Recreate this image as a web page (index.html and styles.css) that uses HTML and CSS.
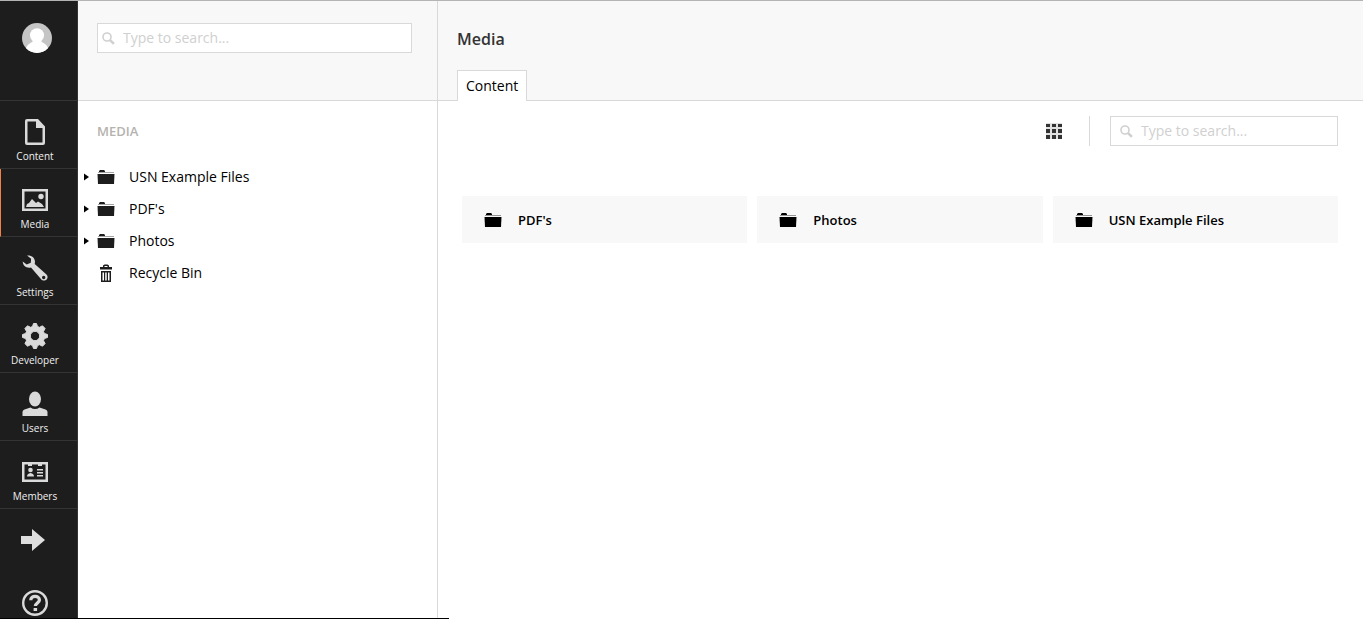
FILE: index.html
```html
<!DOCTYPE html>
<html lang="en">
<head>
<meta charset="utf-8">
<meta name="viewport" content="width=device-width, initial-scale=1">
<title>Media</title>
<link rel="stylesheet" href="styles.css">
</head>
<body>
<svg class="symbols" aria-hidden="true">
  <symbol id="folder" viewBox="0 0 18 14"><path d="M2 1 3 0h4l1 1v1H2z"/><path d="M1 2h16v1H1z" opacity=".4"/><path d="M.5 4h17L17 14H1z"/></symbol>
  <symbol id="search" viewBox="0 0 13 13"><circle cx="5" cy="5" r="4" fill="none" stroke="currentColor" stroke-width="1.600"/><path d="m7.200 9 1.800-1.800L12.800 11 11 12.800z"/></symbol>
  <symbol id="caret" viewBox="0 0 5 8"><path d="M0 .5 5 4 0 7.500z"/></symbol>
</svg>
<div class="app">
  <nav class="sections" aria-label="Sections">
    <button class="avatar" aria-label="Profile">
      <svg width="30" height="30" viewBox="0 0 30 30"><defs><clipPath id="round"><circle cx="15" cy="15" r="15"/></clipPath></defs><g clip-path="url(#round)"><path fill="#c5c5c5" d="M0 0h30v30H0z"/><circle cx="15" cy="12.300" r="7" fill="#fff"/><path fill="#fff" d="M11 16h8v2q1 1.500 3 2.200 3 1.500 4.500 5.300V30h-23v-4.500Q5 21.700 8 20.200q2-.7 3-2.200z"/></g></svg>
    </button>
    <a class="section" href="#content"><svg class="icon" viewBox="0 0 26 26"><path fill-rule="evenodd" d="M5 0h11l7 7.500V24q0 2-2 2H5q-2 0-2-2V2q0-2 2-2zm.5 2.500v21h15V9H14V2.500z"/></svg>Content</a>
    <a class="section active" href="#media"><svg class="icon" viewBox="0 0 26 26"><path fill-rule="evenodd" d="M0 2h26v22H0zm2.500 2.500v17h21v-17z"/><path d="m4 20 1-3 2-1 3-4 4 4 2-1.500 4 2.500 2 3z"/><circle cx="19" cy="9.500" r="2.700"/></svg>Media</a>
    <a class="section" href="#settings"><svg class="icon" viewBox="0 0 26 26"><path fill-rule="evenodd" d="M5 .5C9.500 0 13 2.800 13 7l-.3 2L24.500 19.500c2 2 1 5-1 5.700-2 .8-3.600.2-5-1.700L9 12.500c-4.500 1-8-1.500-8.300-6l4 3 4.100-1.800.3-4zm16.700 20.300a1.700 1.700 0 1 0 0 3.400 1.700 1.700 0 0 0 0-3.400z"/></svg>Settings</a>
    <a class="section" href="#developer"><svg class="icon" viewBox="0 0 26 26"><path fill-rule="evenodd" d="M11.500.5h3l1 3 2 .8 3-1.500 2.600 2.700-1.600 3 .9 2 3.100 1v3l-3.100 1-.9 2.200 1.600 2.900-2.600 2.600-3-1.500-2 .8-1 3h-3l-1-3-2-.8-3 1.500-2.600-2.600 1.600-2.900-.9-2.200-3.100-1v-3l3.100-1 .9-2-1.600-3 2.600-2.700 3 1.500 2-.8zM13 8.300a4.700 4.700 0 1 0 0 9.400 4.700 4.700 0 0 0 0-9.400z" stroke="currentColor" stroke-linejoin="round"/></svg>Developer</a>
    <a class="section" href="#users"><svg class="icon" viewBox="0 0 26 26"><ellipse cx="13" cy="8" rx="6" ry="7.500"/><path d="M.5 25v-4q0-2 2-2.500l6-2q4.500 3 9 0l6 2q2 .5 2 2.500v4z"/></svg>Users</a>
    <a class="section" href="#members"><svg class="icon" viewBox="0 0 26 26"><path fill-rule="evenodd" d="M0 3h26v20H0zm2.500 2.500v15h21v-15H20V7h-4V5.500h-6V7H6V5.500z"/><circle cx="8.500" cy="11" r="2.300"/><path d="M5 17.500q0-3 3.500-3.500 3.500.5 3.500 3.500zM15 10h6v1.500h-6zM15 13h6v1.500h-6zM15 16h6v1.500h-6z"/></svg>Members</a>
    <a class="more" href="#more" aria-label="More sections"><svg width="24" height="22" viewBox="0 0 24 22"><path d="M0 7h11V0l13 11-13 11v-7H0z"/></svg></a>
    <a class="help" href="#help" aria-label="Help"><svg class="icon" viewBox="0 0 26 26"><g fill="none" stroke="currentColor"><circle cx="13" cy="13" r="11.800" stroke-width="2.400"/><path d="M8.800 10.300c0-5.200 8.600-5.200 8.600-.4 0 3-4 3.300-4 6.200" stroke-width="3.300"/></g><path d="M11.600 18h3.500v3h-3.500z"/></svg></a>
  </nav>
  <aside class="tree">
    <div class="tree-head">
      <label class="search"><svg width="13" height="13"><use href="#search"/></svg><input type="text" placeholder="Type to search..." aria-label="Search tree"></label>
    </div>
    <h2 class="tree-title">MEDIA</h2>
    <ul class="nodes">
      <li><a href="#usn"><svg class="caret" width="5" height="8"><use href="#caret"/></svg><svg class="node-icon" width="18" height="14"><use href="#folder"/></svg>USN Example Files</a></li>
      <li><a href="#pdfs"><svg class="caret" width="5" height="8"><use href="#caret"/></svg><svg class="node-icon" width="18" height="14"><use href="#folder"/></svg>PDF's</a></li>
      <li><a href="#photos"><svg class="caret" width="5" height="8"><use href="#caret"/></svg><svg class="node-icon" width="18" height="14"><use href="#folder"/></svg>Photos</a></li>
      <li><a href="#bin"><span class="caret"></span><svg class="node-icon" width="18" height="18" viewBox="0 0 18 18"><path fill-rule="evenodd" d="M3 3h3V1.500L7.500.5h3L12 1.500V3h3v2.500H3zm4.500 0h3V2h-3zM4 7h10v11H4zm1.500 1.500v8H7v-8zm2.700 0v8h1.500v-8zm2.800 0v8h1.500v-8z"/></svg>Recycle Bin</a></li>
    </ul>
  </aside>
  <main class="main">
    <header class="main-head">
      <h1>Media</h1>
      <div class="tabs" role="tablist"><button class="tab" role="tab" aria-selected="true">Content</button></div>
    </header>
    <div class="toolbar">
      <button class="grid-button" aria-label="Grid layout"><svg width="16" height="16" viewBox="0 0 16 16"><path d="M0 0h16v16H0z" opacity=".15"/><path d="M0 1h4v3H0zM6 1h4v3H6zM12 1h4v3h-4zM0 6h4v4H0zM6 6h4v4H6zM12 6h4v4h-4zM0 12h4v4H0zM6 12h4v4H6zM12 12h4v4h-4z"/></svg></button>
      <label class="search list-search"><svg width="13" height="13"><use href="#search"/></svg><input type="text" placeholder="Type to search..." aria-label="Search media"></label>
    </div>
    <div class="cards">
      <a class="card" href="#pdfs"><svg width="18" height="14"><use href="#folder"/></svg>PDF's</a>
      <a class="card" href="#photos"><svg width="18" height="14"><use href="#folder"/></svg>Photos</a>
      <a class="card" href="#usn"><svg width="18" height="14"><use href="#folder"/></svg>USN Example Files</a>
    </div>
  </main>
</div>
<div class="status-edge"></div>
</body>
</html>
```
FILE: styles.css
```css
* { box-sizing: border-box; }
body {
  margin: 0;
  font: 14px/20px "Open Sans", sans-serif;
  color: #000;
  background: #fff;
}
a { color: inherit; text-decoration: none; }
button { font: inherit; color: inherit; border: 0; background: none; padding: 0; }
svg { display: block; fill: currentColor; flex: none; }
.symbols { position: absolute; width: 0; height: 0; }
.app {
  display: grid;
  grid-template-columns: 78px 360px 1fr;
  height: 100vh;
  overflow: hidden;
  border-top: 1px solid #b4b4b4;
}

/* Section bar */
.sections {
  display: flex;
  flex-direction: column;
  background: #1d1d1d;
  border-right: 1px solid #343434;
  color: #dedede;
  overflow: hidden;
}
.avatar {
  flex: none;
  display: flex;
  justify-content: center;
  height: 100px;
  padding: 22px 3px 0 0;
  border-bottom: 1px solid #343434;
}
.section {
  flex: none;
  display: flex;
  flex-direction: column;
  align-items: center;
  gap: 3px;
  height: 68px;
  padding: 18px 7px 0 0;
  border-bottom: 1px solid #343434;
  font-size: 10px;
  line-height: 16px;
  color: #f0f0f0;
}
.section.active { border-left: 1px solid #f57f45; padding-right: 8px; }
.icon { width: 26px; height: 26px; color: #dadada; }
.more { flex: none; padding: 20px 0 0 21px; height: 81px; }
.help { flex: none; padding-left: 22px; }

/* Tree */
.tree { border-right: 1px solid #d9d9d9; }
.tree-head {
  height: 100px;
  padding: 22px 25px 0 19px;
  background: #f8f8f8;
  border-bottom: 1px solid #d9d9d9;
}
.search {
  display: flex;
  align-items: center;
  gap: 8px;
  height: 30px;
  padding: 0 4px;
  border: 1px solid #d9d9d9;
  background: #fff;
  color: #d0d0d0;
}
.search input {
  flex: 1;
  min-width: 0;
  padding: 0;
  border: 0;
  outline: 0;
  background: none;
  font: inherit;
  color: #333;
}
.search input::placeholder { color: #d0d0d0; opacity: 1; }
.tree-title {
  margin: 20px 0 20px 19px;
  font-size: 13px;
  font-weight: 600;
  line-height: 20px;
  color: #b5b3ae;
}
.nodes { margin: 0; padding: 0; list-style: none; }
.nodes a { display: flex; align-items: center; height: 32px; padding-left: 6px; }
.caret { width: 5px; margin-right: 8px; }
.node-icon { margin-right: 14px; color: #1d1d1d; }

/* Main area */
.main { min-width: 0; }
.main-head {
  display: flex;
  flex-direction: column;
  justify-content: space-between;
  height: 100px;
  padding: 28px 19px 0;
  background: #f8f8f8;
  border-bottom: 1px solid #d9d9d9;
}
h1 { margin: 0; font-size: 16px; font-weight: 600; line-height: 20px; color: #333; }
.tabs { display: flex; margin-bottom: -1px; }
.tab {
  height: 31px;
  padding: 0 8px;
  border: 1px solid #d9d9d9;
  border-bottom: 0;
  background: #fff;
}
.toolbar {
  display: flex;
  justify-content: flex-end;
  align-items: center;
  padding: 15px 25px 0 24px;
}
.grid-button {
  height: 30px;
  padding-right: 27px;
  border-right: 1px solid #d9d9d9;
  margin-right: 20px;
  color: #333;
}
.list-search { width: 228px; padding-left: 9px; }
.cards {
  display: grid;
  grid-template-columns: repeat(3, 1fr);
  gap: 10px;
  padding: 50px 25px 0 24px;
}
.card {
  display: flex;
  align-items: center;
  gap: 16px;
  height: 47px;
  padding: 0 22px;
  background: #f8f8f8;
  font-size: 13px;
  font-weight: 600;
}
.status-edge {
  position: fixed;
  left: 0;
  bottom: 0;
  width: 449px;
  height: 1px;
  background: #000;
}
```
